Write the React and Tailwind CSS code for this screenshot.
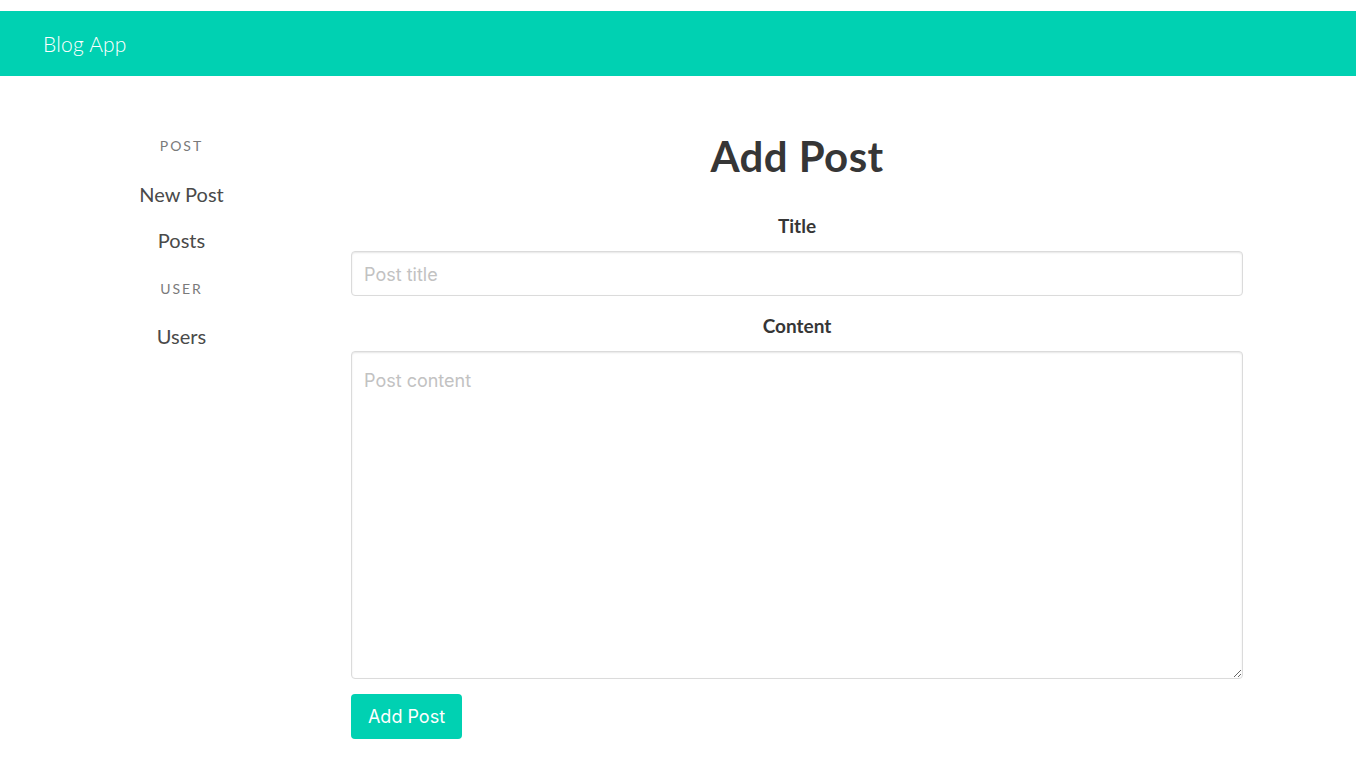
const headFont = { fontFamily: 'Lato, "Open Sans", sans-serif' }

function SideLabel({ children }) {
  return <p className="text-[14px] tracking-[0.14em] uppercase text-[#7a7a7a] leading-none">{children}</p>
}

function SideLink({ children }) {
  return <a className="text-[20px] text-[#4a4a4a] leading-none cursor-pointer">{children}</a>
}

export default function App() {
  return (
    <div className="min-h-screen bg-white pt-[11px]" style={headFont}>
      <nav className="h-[65px] bg-[#00d1b2] flex items-center px-[43px]">
        <span className="text-white text-[21px] font-light tracking-[0.01em]">Blog App</span>
      </nav>

      <div className="flex pt-[63px]">
        <aside className="w-[243px] ml-[60px] flex flex-col items-center">
          <SideLabel>Post</SideLabel>
          <div className="mt-[31px] flex flex-col items-center gap-[26px]">
            <SideLink>New Post</SideLink>
            <SideLink>Posts</SideLink>
          </div>
          <div className="mt-[32px]">
            <SideLabel>User</SideLabel>
          </div>
          <div className="mt-[30px]">
            <SideLink>Users</SideLink>
          </div>
        </aside>

        <main className="ml-[48px] w-[892px] flex flex-col">
          <h1 className="text-center text-[42px] font-bold text-[#363636] leading-none mt-[-4px] tracking-[0.01em]">Add Post</h1>

          <label className="mt-[39px] text-center text-[19px] font-bold text-[#363636] leading-none">Title</label>
          <input
            className="mt-[16px] h-[45px] w-full rounded-[4px] border border-[#dbdbdb] px-[12px] pt-[2px] text-[18px] text-[#363636] placeholder-[#c2c2c2] shadow-[inset_0_1px_2px_rgba(10,10,10,0.1)] outline-none"
            style={{ fontFamily: 'Inter, Roboto, sans-serif' }}
            placeholder="Post title"
          />

          <label className="mt-[20px] text-center text-[19px] font-bold text-[#363636] leading-none">Content</label>
          <textarea
            className="mt-[16px] h-[328px] w-full rounded-[4px] border border-[#dbdbdb] px-[12px] py-[18px] text-[18px] text-[#363636] placeholder-[#c2c2c2] shadow-[inset_0_1px_2px_rgba(10,10,10,0.1)] outline-none leading-[1.2]"
            style={{ fontFamily: 'Inter, Roboto, sans-serif' }}
            placeholder="Post content"
          />

          <div className="mt-[15px]">
            <button
              className="h-[45px] w-[111px] rounded-[4px] bg-[#00d1b2] text-white text-[18px]"
              style={{ fontFamily: 'Inter, Roboto, sans-serif' }}
            >
              Add Post
            </button>
          </div>
        </main>
      </div>
    </div>
  )
}
